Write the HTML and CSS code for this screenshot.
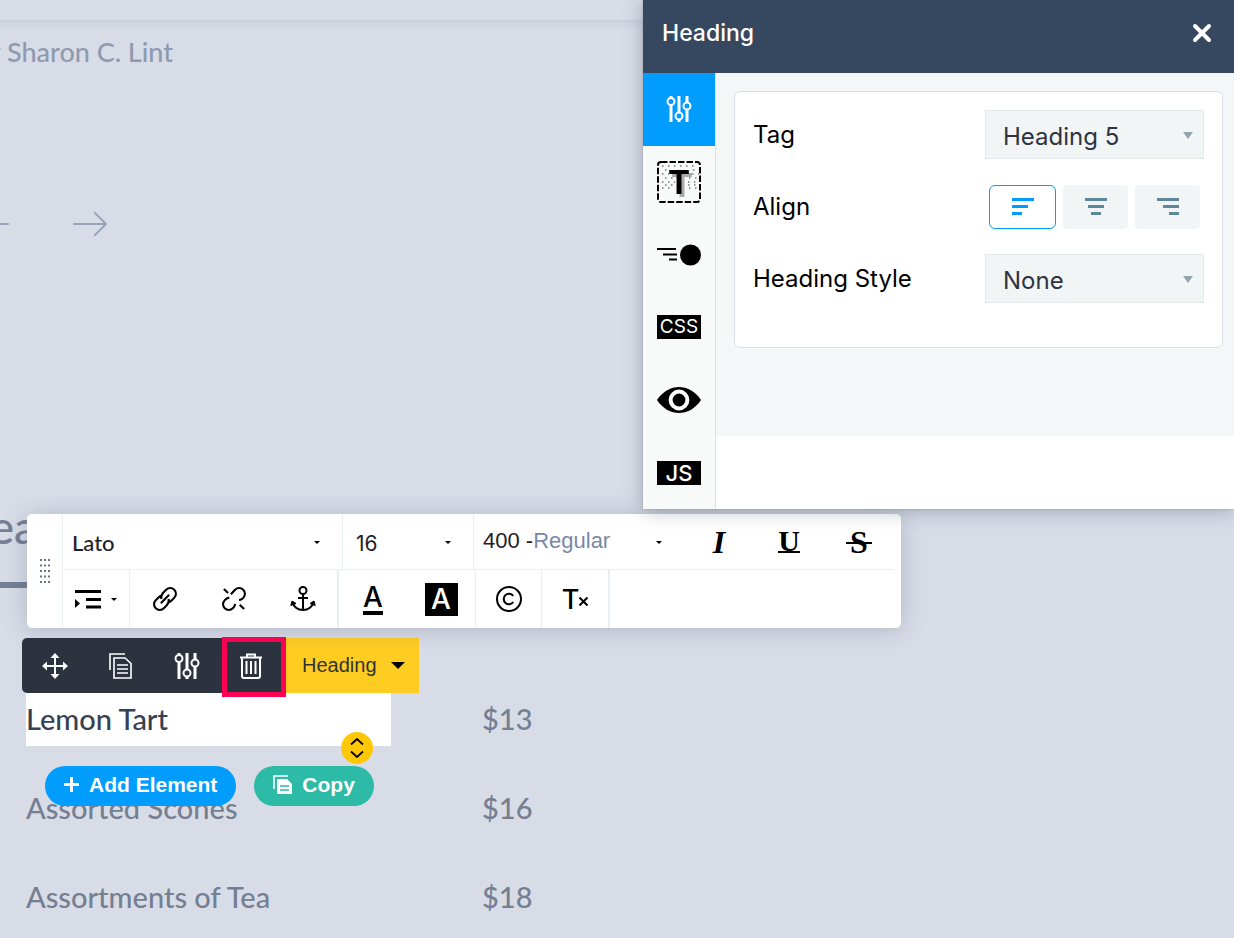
FILE: index.html
```html
<!DOCTYPE html>
<html lang="en">
<head>
  <meta charset="UTF-8">
  <meta name="viewport" content="width=device-width, initial-scale=1.0">
  <title>Page editor</title>
  <link rel="stylesheet" href="styles.css">
</head>
<body>
  <svg class="sprite" aria-hidden="true">
    <symbol id="icon-sliders" viewBox="0 0 26 26">
      <path d="M5 0v2M5 9v17M13 0v16M13 24v2M21 0v6M21 14v12" fill="none" stroke="currentColor" stroke-width="3"/>
      <circle cx="5" cy="5.500" r="3.500" fill="none" stroke="currentColor" stroke-width="2"/>
      <circle cx="13" cy="20" r="3.500" fill="none" stroke="currentColor" stroke-width="2"/>
      <circle cx="21" cy="10" r="3.500" fill="none" stroke="currentColor" stroke-width="2"/>
    </symbol>
  </svg>

  <!-- Edited page -->
  <main class="canvas">
    <div class="site-header"></div>
    <p class="author">by Sharon C. Lint</p>
    <div class="slider-nav">
      <button class="arrow" aria-label="Previous">
        <svg width="34" height="24" viewBox="0 0 34 24"><path d="M33 12H1M12 1L1 12l11 11"/></svg>
      </button>
      <button class="arrow" aria-label="Next">
        <svg width="34" height="24" viewBox="0 0 34 24"><path d="M1 12h32M22 1l11 11-11 11"/></svg>
      </button>
    </div>
    <h2 class="menu-title">Tea</h2>

    <div class="menu">
      <div class="menu-row">
        <div class="menu-name selected">
          Lemon Tart
          <div class="element-bar">
            <button class="bar-button" aria-label="Move">
              <svg width="26" height="26" viewBox="0 0 26 26"><path d="M13 2v22M2 13h22" fill="none" stroke="currentColor" stroke-width="2"/><path d="M13 0l4.500 5h-9zM13 26l4.500-5h-9zM0 13l5-4.500v9zM26 13l-5-4.500v9z" fill="currentColor"/></svg>
            </button>
            <button class="bar-button" aria-label="Duplicate">
              <svg width="24" height="26" viewBox="0 0 24 26"><path d="M1 17V1h15M5 5h11l6 5.500V25H5zM8 12h11M8 16h11M8 20h11" fill="none" stroke="currentColor" stroke-width="1.600"/></svg>
            </button>
            <button class="bar-button" aria-label="Settings">
              <svg width="26" height="26"><use href="#icon-sliders"/></svg>
            </button>
            <button class="bar-button bar-delete" aria-label="Delete">
              <svg width="22" height="26" viewBox="0 0 22 26"><path d="M0 4.500h22M7 4V1.500h8V4M2 5v18q0 2 2 2h14q2 0 2-2V5M6.500 8v13M11 8v13M15.500 8v13" fill="none" stroke="currentColor" stroke-width="2"/></svg>
            </button>
            <button class="bar-type">Heading <span class="type-caret"></span></button>
          </div>
          <button class="resize-handle" aria-label="Resize">
            <svg width="14" height="20" viewBox="0 0 14 20"><path d="M1 6.500l6-5.500 6 5.500M1 13.500L7 19l6-5.500" fill="none" stroke="#000" stroke-width="1.800"/></svg>
          </button>
          <div class="element-actions">
            <button class="pill pill-add">
              <svg width="15" height="15" viewBox="0 0 15 15"><path d="M7.500 0v15M0 7.500h15" stroke="currentColor" stroke-width="3"/></svg>
              Add Element
            </button>
            <button class="pill pill-copy">
              <svg width="19" height="19" viewBox="0 0 19 19"><path d="M1 14V1h14" fill="none" stroke="currentColor" stroke-width="1.600"/><path d="M4 4h10l5 5v10H4z" fill="currentColor"/><path d="M7 11h9M7 15h9" stroke="#2dbaa7" stroke-width="1.500"/></svg>
              Copy
            </button>
          </div>
        </div>
        <div class="menu-price">$13</div>
      </div>
      <div class="menu-row">
        <div class="menu-name">Assorted Scones</div>
        <div class="menu-price">$16</div>
      </div>
      <div class="menu-row">
        <div class="menu-name">Assortments of Tea</div>
        <div class="menu-price">$18</div>
      </div>
    </div>
  </main>

  <!-- Text toolbar -->
  <div class="text-toolbar">
    <div class="grip">
      <svg width="10" height="26" viewBox="0 0 10 26"><path d="M1 1v24M5 1v24M9 1v24" stroke="#6d7482" stroke-width="2" stroke-dasharray="2 3.500"/></svg>
    </div>
    <div class="toolbar-rows">
      <div class="toolbar-row font-row">
        <div class="dropdown">
          <select class="font-family" aria-label="Font family"><option>Lato</option></select>
        </div>
        <div class="dropdown">
          <select class="font-size" aria-label="Font size"><option>16</option></select>
        </div>
        <div class="dropdown">
          <button class="font-weight">400 -<span class="weight-name">Regular</span></button>
        </div>
        <button class="tool tool-serif tool-italic" aria-label="Italic">I</button>
        <button class="tool tool-serif" aria-label="Underline"><span class="underlined">U</span></button>
        <button class="tool tool-serif" aria-label="Strikethrough"><span class="struck">S</span></button>
      </div>
      <div class="toolbar-row format-row">
        <div class="tool-group">
          <button class="tool tool-indent" aria-label="Indent">
            <svg width="26" height="19" viewBox="0 0 26 19"><path d="M0 1.500h26M11 9.500h15M11 17h15" stroke="#000" stroke-width="3"/><path d="M0 9l5 4.500-5 4.500z"/></svg>
            <span class="mini-caret"></span>
          </button>
        </div>
        <div class="tool-group">
          <button class="tool" aria-label="Link">
            <svg class="line-icon" width="26" height="26" viewBox="0 0 25 25"><path d="M9 12.500C8.600 10 9.200 8 11 6.200l2.600-2.600a5.500 5.500 0 0 1 7.800 7.800L18.800 14c-1 1-2 1.600-3.200 1.900M16 12.500c.4 2.500-.2 4.500-2 6.300l-2.600 2.600a5.500 5.500 0 0 1-7.800-7.800L6.200 11c1-1 2-1.600 3.200-1.900M8.500 16.500l8-8"/></svg>
          </button>
          <button class="tool" aria-label="Unlink">
            <svg class="line-icon" width="26" height="26" viewBox="0 0 25 25"><path d="M9.500 8l4-4.400a5.500 5.500 0 0 1 7.900 7.800c-1 1.200-2 1.900-4 2.200M8 11.200c-2 .3-3.400 1.200-4.400 2.400a5.500 5.500 0 0 0 7.800 7.800c1.200-1.200 2-2.400 2.200-4.200M2.800 2.800l4 4M18 18l4.200 4.200"/></svg>
          </button>
          <button class="tool" aria-label="Anchor">
            <svg class="line-icon" width="26" height="26" viewBox="0 0 26 26"><circle cx="13" cy="4.500" r="3.500"/><path d="M13 8v16M8 12h10M2.500 16c1 4.500 5 8 10.500 8s9.500-3.500 10.500-8"/><path d="M.8 19.500L2 15l4 2.500zM25.200 19.500L24 15l-4 2.500z" fill="#000" stroke-width="1"/></svg>
          </button>
        </div>
        <div class="tool-group">
          <button class="tool" aria-label="Text color"><span class="text-color">A</span></button>
          <button class="tool" aria-label="Background color"><span class="back-color">A</span></button>
        </div>
        <div class="tool-group">
          <button class="tool" aria-label="Special character">
            <svg class="line-icon" width="26" height="26" viewBox="0 0 26 26"><circle cx="13" cy="13" r="12"/><path d="M17.200 16a5.200 5.200 0 1 1 0-6"/></svg>
          </button>
        </div>
        <div class="tool-group">
          <button class="tool clear-format" aria-label="Clear formatting">T
            <svg class="line-icon" width="9" height="9" viewBox="0 0 9 9"><path d="M.5.500l8 8M8.500.500l-8 8"/></svg>
          </button>
        </div>
      </div>
    </div>
  </div>

  <!-- Settings panel -->
  <aside class="panel">
    <header class="panel-header">
      <h1 class="panel-title">Heading</h1>
      <button class="panel-close" aria-label="Close">
        <svg width="20" height="20" viewBox="0 0 20 20"><path d="M3 3l14 14M17 3L3 17" stroke="currentColor" stroke-width="4" stroke-linecap="round"/></svg>
      </button>
    </header>
    <div class="panel-body">
      <nav class="panel-tabs">
        <button class="panel-tab active" aria-label="Settings">
          <svg width="26" height="26"><use href="#icon-sliders"/></svg>
        </button>
        <button class="panel-tab" aria-label="Text style">
          <svg width="44" height="42" viewBox="0 0 44 42">
            <rect x="1" y="1" width="42" height="40" rx="3" fill="none" stroke="#000" stroke-width="2" stroke-dasharray="6.500 2"/>
            <path d="M5 5h36M5 13h7M35 13h7M5 21h13M31 21h10M5 27h10M32 27h9" stroke="#777" stroke-width="1.500" stroke-dasharray="1.500 4.500"/>
            <path d="M8 9h3M36 9h6M8 17h9M32 17h9M8 24h9M31 24h9" stroke="#777" stroke-width="1.500" stroke-dasharray="1.500 4.500"/>
            <text class="tab-glyph" x="22" y="33">T</text>
          </svg>
        </button>
        <button class="panel-tab" aria-label="Animation">
          <svg width="44" height="22" viewBox="0 0 44 22"><path d="M0 5h19M6 10.500h14M12 15.500h8" stroke="#000" stroke-width="2"/><circle cx="33.500" cy="11" r="10.500"/></svg>
        </button>
        <button class="panel-tab"><span class="tab-label">CSS</span></button>
        <button class="panel-tab" aria-label="Visibility">
          <svg width="44" height="26" viewBox="0 0 44 26"><path d="M0 13C6 4 14 0 22 0s16 4 22 13c-6 9-14 13-22 13S6 22 0 13z"/><circle cx="22" cy="13" r="8.400" fill="none" stroke="#fff" stroke-width="4"/></svg>
        </button>
        <button class="panel-tab"><span class="tab-label tab-label-js">JS</span></button>
      </nav>
      <div class="panel-content">
        <div class="settings">
          <form class="card">
            <div class="field">
              <label class="field-label" for="tag">Tag</label>
              <div class="field-select">
                <select id="tag"><option>Heading 5</option></select>
              </div>
            </div>
            <div class="field">
              <span class="field-label" id="align-label">Align</span>
              <div class="align-options" role="group" aria-labelledby="align-label">
                <button type="button" class="align-option active" aria-label="Left">
                  <svg width="22" height="17" viewBox="0 0 22 17"><path d="M0 1.500h22M0 8.500h16M0 15.500h10" stroke="currentColor" stroke-width="3"/></svg>
                </button>
                <button type="button" class="align-option" aria-label="Center">
                  <svg width="22" height="17" viewBox="0 0 22 17"><path d="M0 1.500h22M3 8.500h16M6 15.500h10" stroke="currentColor" stroke-width="3"/></svg>
                </button>
                <button type="button" class="align-option" aria-label="Right">
                  <svg width="22" height="17" viewBox="0 0 22 17"><path d="M0 1.500h22M6 8.500h16M12 15.500h10" stroke="currentColor" stroke-width="3"/></svg>
                </button>
              </div>
            </div>
            <div class="field">
              <label class="field-label" for="heading-style">Heading Style</label>
              <div class="field-select">
                <select id="heading-style"><option>None</option></select>
              </div>
            </div>
          </form>
        </div>
      </div>
    </div>
  </aside>
</body>
</html>
```
FILE: styles.css
```css
* {
  margin: 0;
  padding: 0;
  box-sizing: border-box;
}

body {
  font-family: Inter, 'Liberation Sans', sans-serif;
  background: #d8dce7;
  color: #000;
  overflow-x: hidden;
}

button,
select {
  font: inherit;
  color: inherit;
  background: none;
  border: none;
  cursor: pointer;
}

select {
  appearance: none;
}

svg {
  display: block;
  flex-shrink: 0;
}

.sprite {
  position: absolute;
  width: 0;
  height: 0;
}

/* Edited page, scrolled a little to the right */
.canvas {
  margin-left: -32px;
  font-family: Lato, sans-serif;
}

.site-header {
  height: 20px;
  box-shadow: 0 2px 8px rgba(90, 95, 110, 0.15);
}

.author {
  padding: 12px 0 0 4px;
  font-size: 27px;
  font-weight: 500;
  line-height: 40px;
  color: #8e9ab0;
}

.slider-nav {
  display: flex;
  gap: 64px;
  margin-top: 140px;
  padding-left: 7px;
}

.arrow {
  color: #9ba3b9;
}

.arrow path {
  fill: none;
  stroke: currentColor;
  stroke-width: 2;
  stroke-linecap: round;
}

.menu-title {
  margin-top: 262px;
  padding-bottom: 26px;
  border-bottom: 6px solid #757f96;
  width: 365px;
  font-size: 46px;
  line-height: 58px;
  font-weight: 500;
  color: #757f96;
}

.menu {
  display: flex;
  flex-direction: column;
  gap: 36px;
  margin-top: 105px;
  padding-left: 58px;
}

.menu-row {
  display: grid;
  grid-template-columns: 365px 1fr;
  gap: 91px;
  font-size: 29px;
  font-weight: 500;
  line-height: 51px;
  color: #757f92;
}

.menu-name,
.menu-price {
  padding-bottom: 2px;
}

.selected {
  position: relative;
  background: #fff;
  color: #364154;
}

.element-bar {
  position: absolute;
  left: -4px;
  bottom: 100%;
  display: flex;
  height: 55px;
  background: #2c323e;
  color: #fff;
  border-radius: 5px 0 0 5px;
}

.bar-button {
  width: 66px;
  display: flex;
  align-items: center;
  justify-content: center;
}

.bar-delete {
  position: relative;
  width: 64px;
  margin-left: 2px;
  padding-right: 6px;
}

.bar-delete::after {
  content: '';
  position: absolute;
  inset: -1px 0 -4px;
  border: 5px solid #ff0052;
}

.bar-type {
  display: flex;
  align-items: center;
  gap: 14px;
  padding: 0 14px 0 16px;
  font-family: 'Liberation Sans', sans-serif;
  font-size: 20px;
  color: #333;
  background: #ffcd22;
}

.type-caret {
  border: 7px solid transparent;
  border-top-color: #000;
  border-bottom-width: 0;
}

.resize-handle {
  position: absolute;
  right: 18px;
  bottom: -18px;
  width: 32px;
  height: 32px;
  display: flex;
  align-items: center;
  justify-content: center;
  border-radius: 50%;
  background: #ffc805;
}

.element-actions {
  position: absolute;
  left: 19px;
  top: 73px;
  display: flex;
  gap: 18px;
}

.pill {
  display: flex;
  align-items: center;
  gap: 10px;
  height: 40px;
  padding: 0 19px 3px;
  border-radius: 20px;
  font-family: 'Liberation Sans', sans-serif;
  font-size: 21px;
  font-weight: 700;
  line-height: 24px;
  color: #fff;
  white-space: nowrap;
}

.pill-add {
  background: #009dff;
}

.pill-copy {
  background: #2dbaa7;
}

/* Text toolbar */
.text-toolbar {
  position: absolute;
  left: 27px;
  top: 514px;
  width: 874px;
  display: flex;
  background: #fff;
  border-radius: 5px;
  box-shadow: 0 2px 22px rgba(60, 70, 100, 0.25);
}

.grip {
  width: 36px;
  display: flex;
  align-items: center;
  justify-content: center;
  border-right: 1px solid #e8eef2;
}

.toolbar-rows {
  flex: 1;
  margin-right: 7px;
}

.toolbar-row {
  display: flex;
}

.font-row {
  display: grid;
  grid-template-columns: 280px 131px 1fr 70px 70px 70px;
  height: 56px;
  border-bottom: 1px solid #e8eef2;
}

.format-row {
  height: 58px;
}

.dropdown {
  position: relative;
  display: flex;
  font-size: 21px;
  color: #1d2129;
}

.dropdown:not(:nth-child(3)) {
  border-right: 1px solid #e8eef2;
}

.dropdown::after {
  content: '';
  position: absolute;
  right: 22px;
  top: 27px;
  border: 3px solid transparent;
  border-top-color: #000;
  border-bottom-width: 0;
  pointer-events: none;
}

.dropdown select,
.dropdown button {
  width: 100%;
  padding-left: 9px;
  text-align: left;
}

.dropdown .font-family {
  font-family: Lato, sans-serif;
  font-size: 22px;
  font-weight: 500;
  padding-top: 2px;
}

.dropdown .font-size {
  padding-left: 13px;
  padding-top: 4px;
}

.dropdown .font-weight {
  font-family: 'Liberation Sans', sans-serif;
  font-size: 22px;
  padding-bottom: 2px;
}

.weight-name {
  color: #7889a6;
}

.tool {
  flex: 1;
  display: flex;
  align-items: center;
  justify-content: center;
}

.tool-serif {
  font-family: 'Liberation Serif', serif;
  font-size: 32px;
  font-weight: 700;
  line-height: 24px;
}

.tool-italic {
  font-style: italic;
}

.underlined {
  font-size: 30px;
  line-height: 20px;
  border-bottom: 2px solid #000;
}

.struck {
  position: relative;
}

.struck::after {
  content: '';
  position: absolute;
  left: -4px;
  right: -4px;
  top: 12px;
  height: 2px;
  background: #000;
}

.tool-group {
  display: flex;
  border-right: 1px solid #e8eef2;
}

.tool-group:nth-child(1) {
  width: 67px;
}

.tool-group:nth-child(2) {
  width: 209px;
  border-right-width: 2px;
}

.tool-group:nth-child(3) {
  width: 137px;
}

.tool-group:nth-child(4) {
  width: 66px;
}

.tool-group:nth-child(5) {
  width: 68px;
  border-right-width: 2px;
}

.tool-indent {
  gap: 10px;
}

.mini-caret {
  border: 3px solid transparent;
  border-top-color: #000;
  border-bottom-width: 0;
}

.line-icon {
  fill: none;
  stroke: #000;
  stroke-width: 2;
}

.text-color {
  font-size: 28px;
  font-weight: 500;
  line-height: 28px;
  border-bottom: 4px solid #000;
}

.back-color {
  width: 33px;
  height: 33px;
  font-size: 28px;
  font-weight: 500;
  line-height: 32px;
  text-align: center;
  color: #fff;
  background: #000;
}

.clear-format {
  font-size: 27px;
  font-weight: 500;
}

.clear-format svg {
  margin-top: 4px;
}

/* Settings panel */
.panel {
  position: absolute;
  top: 0;
  right: 0;
  width: 591px;
  background: #fff;
  box-shadow: 0 2px 18px rgba(60, 70, 90, 0.35), 0 0 2px rgba(60, 70, 90, 0.3);
}

.panel-header {
  display: flex;
  align-items: center;
  justify-content: space-between;
  height: 73px;
  padding: 0 22px 8px 19px;
  background: #364760;
  color: #fff;
}

.panel-title {
  font-size: 23px;
  font-weight: 500;
}

.panel-body {
  display: flex;
}

.panel-tabs {
  width: 73px;
  display: grid;
  grid-auto-rows: 1fr;
  background: #f8fafa;
  border-right: 1px solid #dae2e9;
}

.panel-tab {
  display: flex;
  align-items: center;
  justify-content: center;
}

.panel-tab.active {
  background: #009dff;
  color: #fff;
}

.tab-glyph {
  font-size: 33px;
  font-weight: 700;
  text-anchor: middle;
  filter: drop-shadow(3px 3px 0 #aaa);
}

.tab-label {
  width: 44px;
  font-size: 19px;
  line-height: 24px;
  text-align: center;
  color: #fff;
  background: #000;
}

.tab-label-js {
  font-size: 22px;
  font-weight: 500;
}

.panel-content {
  flex: 1;
  padding-bottom: 73px;
}

.settings {
  padding: 18px 11px 88px 18px;
  background: #f3f7f8;
}

.card {
  display: flex;
  flex-direction: column;
  gap: 23px;
  padding: 18px 18px 44px;
  border: 1px solid #d9e1e7;
  border-radius: 6px;
  background: #fff;
}

.field {
  display: flex;
  align-items: center;
  justify-content: space-between;
  height: 49px;
}

.field-label {
  font-size: 24px;
}

.field-select {
  position: relative;
  width: 219px;
}

.field-select::after {
  content: '';
  position: absolute;
  right: 11px;
  top: 22px;
  border: 5px solid transparent;
  border-top: 7px solid #90a4b0;
  border-bottom-width: 0;
  pointer-events: none;
}

.field-select select {
  width: 100%;
  height: 49px;
  padding: 4px 17px 0;
  font-size: 24px;
  color: #2f3341;
  background: #f1f5f6;
  border: 1px solid #e3e9eb;
}

.align-options {
  display: flex;
  gap: 7px;
  width: 219px;
  padding: 0 4px;
}

.align-option {
  flex: 1;
  height: 44px;
  display: flex;
  align-items: center;
  justify-content: center;
  border-radius: 4px;
  color: #5f879c;
  background: #f1f5f6;
}

.align-option.active {
  color: #009dff;
  background: #fff;
  border: 1px solid #009dff;
  border-radius: 6px;
}
```
